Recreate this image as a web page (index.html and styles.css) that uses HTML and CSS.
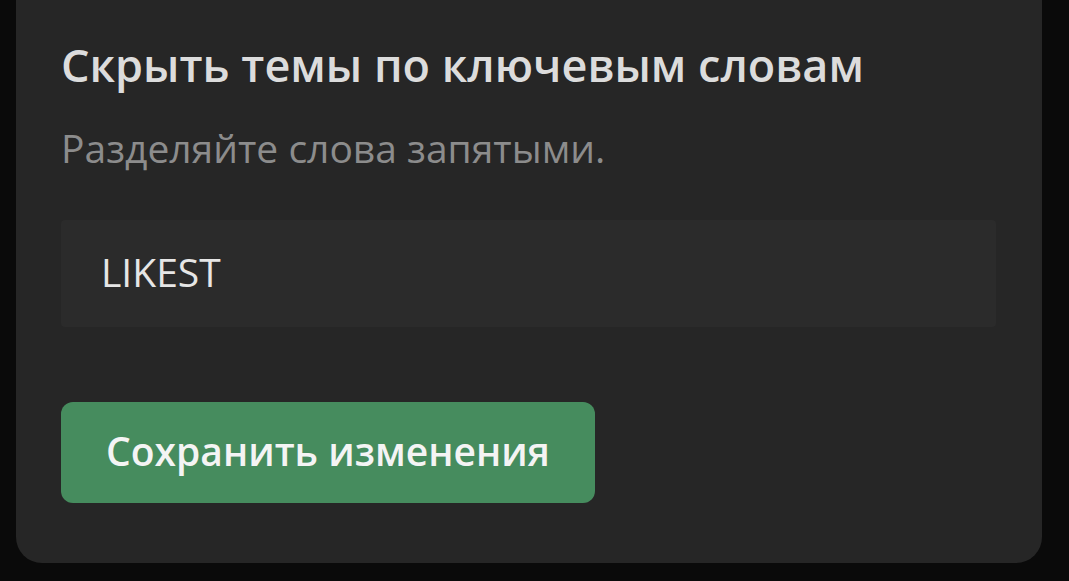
FILE: index.html
```html
<!DOCTYPE html>
<html lang="ru">
<head>
    <meta charset="UTF-8">
    <meta name="viewport" content="width=device-width, initial-scale=1.0">
    <title>Скрыть темы по ключевым словам</title>
    <link rel="stylesheet" href="styles.css">
</head>
<body>

    <div class="settings-card">
        <h2>Скрыть темы по ключевым словам</h2>
        <p class="hint">Разделяйте слова запятыми.</p>

        <form class="keywords-form">
            <input type="text" class="keywords-input" name="keywords" value="LIKEST">
            <button type="submit" class="save-btn">Сохранить изменения</button>
        </form>
    </div>

</body>
</html>
```

FILE: styles.css
```css
body {
    font-family: "Open Sans", "Noto Sans", sans-serif;
    background-color: #0a0a0a;
    margin: 0;
    padding: 0;
}

.settings-card {
    background-color: #262626;
    margin-left: 16px;
    width: 1026px;
    padding: 37px 45px 60px 45px;
    box-sizing: border-box;
    border-radius: 0 0 26px 26px;
}

.settings-card h2 {
    margin: 0;
    font-size: 45px;
    line-height: 56px;
    font-weight: 600;
    color: #dcdcdc;
}

.hint {
    margin: 31px 0 0 0;
    font-size: 39px;
    line-height: 48px;
    color: #8c8c8c;
}

.keywords-form {
    display: flex;
    flex-direction: column;
    align-items: flex-start;
    margin-top: 48px;
}

.keywords-input {
    width: 935px;
    height: 107px;
    box-sizing: border-box;
    padding: 0 40px 4px 40px;
    border: none;
    border-radius: 4px;
    background-color: #2b2b2b;
    color: #e6e6e6;
    font-family: inherit;
    font-size: 39px;
    outline: none;
}

.save-btn {
    margin-top: 75px;
    width: 534px;
    height: 101px;
    padding: 0 0 4px 0;
    border: none;
    border-radius: 12px;
    background-color: #468c5e;
    color: #f4f4f4;
    font-family: inherit;
    font-size: 39px;
    font-weight: 600;
    cursor: pointer;
}

.save-btn:hover {
    background-color: #3f7f55;
}
```
